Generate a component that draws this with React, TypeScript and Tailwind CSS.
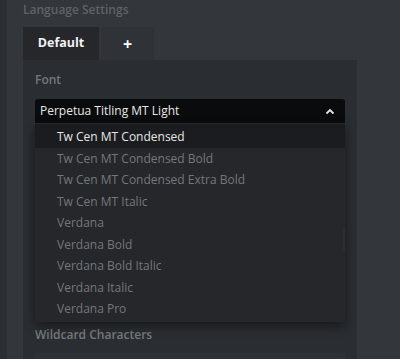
import React from "react";

const items = [
  "Tw Cen MT Condensed",
  "Tw Cen MT Condensed Bold",
  "Tw Cen MT Condensed Extra Bold",
  "Tw Cen MT Italic",
  "Verdana",
  "Verdana Bold",
  "Verdana Bold Italic",
  "Verdana Italic",
  "Verdana Pro",
];

export default function App() {
  return (
    <div
      className="w-[400px] h-[359px] overflow-hidden bg-[#33363b] flex text-[12px]"
      style={{ fontFamily: '"Open Sans", "Noto Sans", sans-serif' }}
    >
      <div className="w-[7px] shrink-0 bg-[#2b2e32]" />
      <div className="w-[16px] shrink-0" />
      <div className="flex-1 pr-[43px] flex flex-col overflow-hidden">
        <div className="h-[27px] shrink-0 pt-[2px] leading-[16px] text-[#5f6368] font-semibold">Language Settings</div>
        <div className="flex h-[33px] shrink-0 gap-[2px]">
          <div className="w-[76px] bg-[#25272b] flex items-center justify-center text-[#f2f2f2] font-bold text-[12.5px]">
            Default
          </div>
          <div className="w-[53px] bg-[#2f3236] flex items-center justify-center text-white font-bold text-[16px]">
            +
          </div>
        </div>
        <div className="shrink-0 bg-[#2a2d31] px-[12px] pt-[12px] pb-[20px]">
          <div className="leading-[16px] text-[#75787d] font-semibold">Font</div>
          <div className="relative mt-[11px]">
            <div className="h-[24px] bg-[#0a0b0c] rounded-t-[3px] flex items-center justify-between pl-[5px] pr-[10px] text-[#e8e8e8]">
              <span>Perpetua Titling MT Light</span>
              <svg width="10" height="7" viewBox="0 0 10 7" fill="none">
                <path d="M1.5 5.5 L5 2 L8.5 5.5" stroke="#e6e6e6" strokeWidth="1.8" />
              </svg>
            </div>
            <div className="absolute left-0 right-0 top-full z-10 bg-[#25272b] pt-[1px] pb-[2px] shadow-[0_4px_10px_rgba(0,0,0,0.45)]">
              {items.map((t, i) => (
                <div
                  key={t}
                  className={
                    i === 0
                      ? "h-[24px] pt-[1px] flex items-center pl-[22px] bg-[#1b1c1f] text-[#e6e6e6]"
                      : "h-[21.5px] flex items-center pl-[22px] text-[#74777c]"
                  }
                >
                  {t}
                </div>
              ))}
              <div className="absolute right-0 top-[104px] w-[2px] h-[24px] bg-[#2b2d31]" />
            </div>
          </div>
          <div className="h-[204px]" />
          <div className="leading-[16px] text-[#76797e] font-semibold">Wildcard Characters</div>
          <div className="mt-[10px] h-[30px] bg-[#2e3135] rounded-t-[3px]" />
        </div>
      </div>
    </div>
  );
}
